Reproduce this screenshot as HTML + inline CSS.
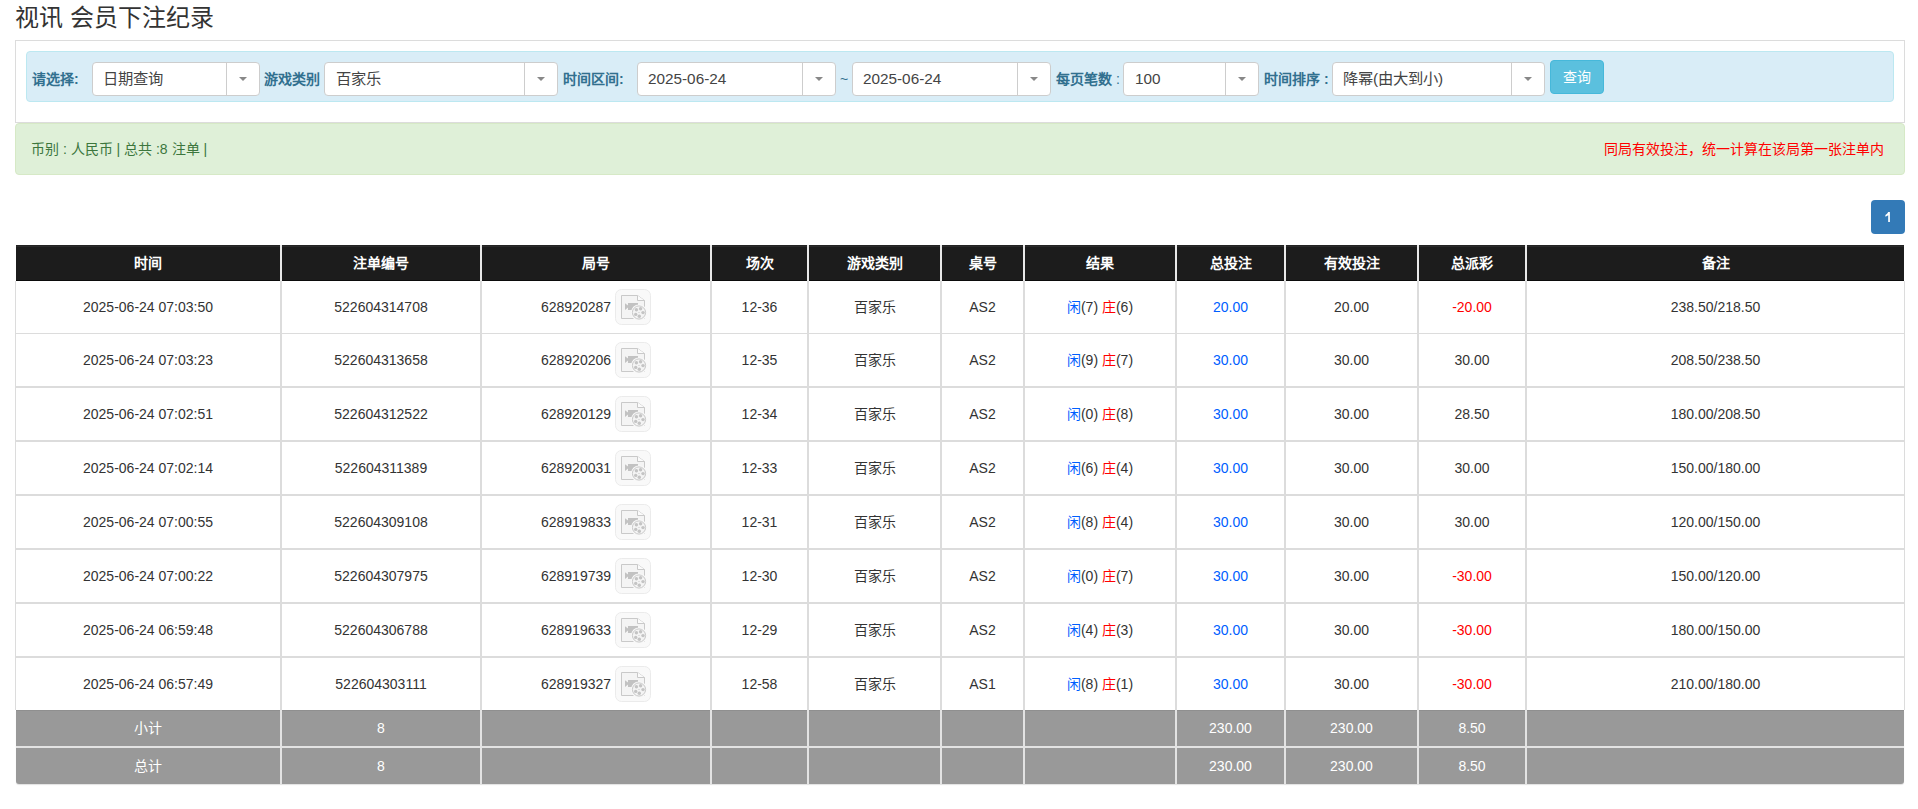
<!DOCTYPE html><html lang="zh-CN"><head><meta charset="utf-8"><style>
*{margin:0;padding:0;box-sizing:border-box}
html,body{width:1918px;height:809px;overflow:hidden;background:#fff}
body{font-family:"Liberation Sans",sans-serif;font-size:14px;color:#333;position:relative}
.a{position:absolute}
.t{position:absolute;white-space:nowrap;line-height:1}
.sel{position:absolute;top:62px;height:34px;background:#fff;border:1px solid #cdcdcd;border-radius:4px}
.sel .dv{position:absolute;top:0;bottom:0;width:1px;background:#cdcdcd}
.sel .ar{position:absolute;top:14px;width:0;height:0;border-left:4px solid transparent;border-right:4px solid transparent;border-top:4px solid #888}
.sel .tx{position:absolute;left:0;top:0;height:32px;line-height:32px;font-size:15.3px;color:#444;white-space:nowrap}
.lb{position:absolute;top:71px;height:16px;line-height:16px;font-weight:bold;color:#31708f;white-space:nowrap;font-size:14px}
.cell{position:absolute;display:flex;align-items:center;justify-content:center;white-space:nowrap;line-height:16px}
.vl{position:absolute;width:2px;background:#dcdcdc}
.hl{position:absolute;background:#dcdcdc}
.ic{display:inline-block;width:36px;height:36px;margin-left:4px;vertical-align:middle}
</style></head><body>
<div class="t" style="left:15px;top:5px;font-size:24px;line-height:26px;color:#333">视讯 会员下注纪录</div>
<div class="a" style="left:15px;top:40px;width:1890px;height:83px;border:1px solid #dcdcdc"></div>
<div class="a" style="left:26px;top:51px;width:1868px;height:51px;background:#d9edf7;border:1px solid #bce8f1;border-radius:4px"></div>
<div class="lb" style="left:32px">请选择:</div>
<div class="lb" style="left:264px">游戏类别</div>
<div class="lb" style="left:563px">时间区间:</div>
<div class="lb" style="left:1056px">每页笔数<span style="font-weight:normal"> :</span></div>
<div class="lb" style="left:1264px">时间排序 :</div>
<div class="sel" style="left:92px;width:168px"><div class="tx" style="left:10px">日期查询</div><div class="dv" style="left:133px"></div><div class="ar" style="left:146px"></div></div>
<div class="sel" style="left:324px;width:234px"><div class="tx" style="left:11px">百家乐</div><div class="dv" style="left:199px"></div><div class="ar" style="left:212px"></div></div>
<div class="sel" style="left:637px;width:199px"><div class="tx" style="left:10px">2025-06-24</div><div class="dv" style="left:164px"></div><div class="ar" style="left:177px"></div></div>
<div class="sel" style="left:852px;width:199px"><div class="tx" style="left:10px">2025-06-24</div><div class="dv" style="left:164px"></div><div class="ar" style="left:177px"></div></div>
<div class="sel" style="left:1123px;width:136px"><div class="tx" style="left:11px">100</div><div class="dv" style="left:101px"></div><div class="ar" style="left:114px"></div></div>
<div class="sel" style="left:1332px;width:213px"><div class="tx" style="left:10px">降幂(由大到小)</div><div class="dv" style="left:178px"></div><div class="ar" style="left:191px"></div></div>
<div class="t" style="left:840px;top:72px;color:#31708f;font-size:14px">~</div>
<div class="a" style="left:1550px;top:60px;width:54px;height:34px;background:#5bc0de;border:1px solid #46b8da;border-radius:4px;color:#fff;font-size:14px;line-height:32px;text-align:center">查询</div>
<div class="a" style="left:15px;top:123px;width:1890px;height:52px;background:#dff0d8;border:1px solid #d6e9c6;border-radius:4px"></div>
<div class="t" style="left:31px;top:141px;color:#3c763d;font-size:14px;line-height:16px">币别 : 人民币 | 总共 :8 注单 |</div>
<div class="t" style="left:1604px;top:141px;color:#f00;font-size:14px;line-height:16px">同局有效投注，统一计算在该局第一张注单内</div>
<div class="a" style="left:1871px;top:200px;width:34px;height:34px;background:#337ab7;border-radius:4px;"><svg width="34" height="34" style="position:absolute;left:0;top:0"><path d="M17.2 12H18.9V22H17.2V15.3Q16 16.3 14.4 16.7V15Q16.3 14.2 17.2 12Z" fill="#fff"/></svg></div>
<div class="a" style="left:16px;top:245px;width:1888px;height:36px;background:#1c1c1c;border-radius:2px 2px 0 0"></div>
<div class="a" style="left:16px;top:245px;width:1888px;height:1px;background:#232323"></div>
<div class="a" style="left:16px;top:246px;width:1888px;height:1px;background:#2a2a2a"></div>
<div class="a" style="left:16px;top:280px;width:1888px;height:1px;background:#0b0b0b"></div>
<div class="a" style="left:15px;top:281px;width:1px;height:429px;background:#dcdcdc"></div>
<div class="a" style="left:1904px;top:281px;width:1px;height:429px;background:#dcdcdc"></div>
<div class="hl" style="left:15px;top:333px;width:1890px;height:1px"></div>
<div class="hl" style="left:15px;top:386px;width:1890px;height:2px"></div>
<div class="hl" style="left:15px;top:440px;width:1890px;height:2px"></div>
<div class="hl" style="left:15px;top:494px;width:1890px;height:2px"></div>
<div class="hl" style="left:15px;top:548px;width:1890px;height:2px"></div>
<div class="hl" style="left:15px;top:602px;width:1890px;height:2px"></div>
<div class="hl" style="left:15px;top:656px;width:1890px;height:2px"></div>
<div class="a" style="left:16px;top:710px;width:1888px;height:74px;background:#999;border-radius:0 0 3px 3px;box-shadow:0 1px 1px rgba(0,0,0,.12)"></div>
<div class="a" style="left:16px;top:710px;width:1888px;height:1px;background:#8f8f8f"></div>
<div class="a" style="left:16px;top:746px;width:1888px;height:2px;background:#e3e3e3"></div>
<div class="a" style="left:280px;top:245px;width:2px;height:36px;background:#e8e8e8"></div>
<div class="vl" style="left:280px;top:281px;height:429px"></div>
<div class="a" style="left:280px;top:710px;width:2px;height:74px;background:#e3e3e3"></div>
<div class="a" style="left:480px;top:245px;width:2px;height:36px;background:#e8e8e8"></div>
<div class="vl" style="left:480px;top:281px;height:429px"></div>
<div class="a" style="left:480px;top:710px;width:2px;height:74px;background:#e3e3e3"></div>
<div class="a" style="left:710px;top:245px;width:2px;height:36px;background:#e8e8e8"></div>
<div class="vl" style="left:710px;top:281px;height:429px"></div>
<div class="a" style="left:710px;top:710px;width:2px;height:74px;background:#e3e3e3"></div>
<div class="a" style="left:807px;top:245px;width:2px;height:36px;background:#e8e8e8"></div>
<div class="vl" style="left:807px;top:281px;height:429px"></div>
<div class="a" style="left:807px;top:710px;width:2px;height:74px;background:#e3e3e3"></div>
<div class="a" style="left:940px;top:245px;width:2px;height:36px;background:#e8e8e8"></div>
<div class="vl" style="left:940px;top:281px;height:429px"></div>
<div class="a" style="left:940px;top:710px;width:2px;height:74px;background:#e3e3e3"></div>
<div class="a" style="left:1023px;top:245px;width:2px;height:36px;background:#e8e8e8"></div>
<div class="vl" style="left:1023px;top:281px;height:429px"></div>
<div class="a" style="left:1023px;top:710px;width:2px;height:74px;background:#e3e3e3"></div>
<div class="a" style="left:1175px;top:245px;width:2px;height:36px;background:#e8e8e8"></div>
<div class="vl" style="left:1175px;top:281px;height:429px"></div>
<div class="a" style="left:1175px;top:710px;width:2px;height:74px;background:#e3e3e3"></div>
<div class="a" style="left:1284px;top:245px;width:2px;height:36px;background:#e8e8e8"></div>
<div class="vl" style="left:1284px;top:281px;height:429px"></div>
<div class="a" style="left:1284px;top:710px;width:2px;height:74px;background:#e3e3e3"></div>
<div class="a" style="left:1417px;top:245px;width:2px;height:36px;background:#e8e8e8"></div>
<div class="vl" style="left:1417px;top:281px;height:429px"></div>
<div class="a" style="left:1417px;top:710px;width:2px;height:74px;background:#e3e3e3"></div>
<div class="a" style="left:1525px;top:245px;width:2px;height:36px;background:#e8e8e8"></div>
<div class="vl" style="left:1525px;top:281px;height:429px"></div>
<div class="a" style="left:1525px;top:710px;width:2px;height:74px;background:#e3e3e3"></div>
<div class="cell" style="left:16px;top:245px;width:264px;height:36px;color:#fff;font-weight:bold"><span>时间</span></div>
<div class="cell" style="left:282px;top:245px;width:198px;height:36px;color:#fff;font-weight:bold"><span>注单编号</span></div>
<div class="cell" style="left:482px;top:245px;width:228px;height:36px;color:#fff;font-weight:bold"><span>局号</span></div>
<div class="cell" style="left:712px;top:245px;width:95px;height:36px;color:#fff;font-weight:bold"><span>场次</span></div>
<div class="cell" style="left:809px;top:245px;width:131px;height:36px;color:#fff;font-weight:bold"><span>游戏类别</span></div>
<div class="cell" style="left:942px;top:245px;width:81px;height:36px;color:#fff;font-weight:bold"><span>桌号</span></div>
<div class="cell" style="left:1025px;top:245px;width:150px;height:36px;color:#fff;font-weight:bold"><span>结果</span></div>
<div class="cell" style="left:1177px;top:245px;width:107px;height:36px;color:#fff;font-weight:bold"><span>总投注</span></div>
<div class="cell" style="left:1286px;top:245px;width:131px;height:36px;color:#fff;font-weight:bold"><span>有效投注</span></div>
<div class="cell" style="left:1419px;top:245px;width:106px;height:36px;color:#fff;font-weight:bold"><span>总派彩</span></div>
<div class="cell" style="left:1527px;top:245px;width:377px;height:36px;color:#fff;font-weight:bold"><span>备注</span></div>
<div class="cell" style="left:16px;top:281px;width:264px;height:52px;"><span>2025-06-24 07:03:50</span></div>
<div class="cell" style="left:282px;top:281px;width:198px;height:52px;"><span>522604314708</span></div>
<div class="cell" style="left:482px;top:281px;width:228px;height:52px;"><span><span style="display:inline-flex;align-items:center"><span>628920287</span><svg class="ic" width="36" height="36" viewBox="0 0 36 36"><rect x="0.5" y="0.5" width="35" height="35" rx="6" fill="#f9f9f9" stroke="#ebebeb"/><path d="M6.5 6.5H22.5L29.5 11.5V29.5H6.5Z" fill="#f4f4f4" stroke="#c9c9c9"/><path d="M22.5 6.5V11.5H29.5" fill="#fbfbfb" stroke="#c9c9c9"/><path d="M10 14.2L13 16.6V14H23V21H13V18.6L10 21Z" fill="#c2c2c2"/><circle cx="24" cy="23.5" r="8" fill="#f9f9f9"/><circle cx="24" cy="23.5" r="6.6" fill="#f4f4f4" stroke="#c9c9c9"/><g fill="#c4c4c4"><circle cx="21.4" cy="20.8" r="1.7"/><circle cx="25.6" cy="19.8" r="1.7"/><circle cx="28" cy="23.6" r="1.7"/><circle cx="24.3" cy="27.2" r="1.7"/><circle cx="20.7" cy="25.4" r="1.7"/><circle cx="24" cy="23.5" r="0.6"/></g></svg></span></span></div>
<div class="cell" style="left:712px;top:281px;width:95px;height:52px;"><span>12-36</span></div>
<div class="cell" style="left:809px;top:281px;width:131px;height:52px;"><span>百家乐</span></div>
<div class="cell" style="left:942px;top:281px;width:81px;height:52px;"><span>AS2</span></div>
<div class="cell" style="left:1025px;top:281px;width:150px;height:52px;"><span><span style="color:#005eff">闲</span>(7) <span style="color:#f00">庄</span>(6)</span></div>
<div class="cell" style="left:1177px;top:281px;width:107px;height:52px;"><span><span style="color:#005eff">20.00</span></span></div>
<div class="cell" style="left:1286px;top:281px;width:131px;height:52px;"><span>20.00</span></div>
<div class="cell" style="left:1419px;top:281px;width:106px;height:52px;"><span><span style="color:#f00">-20.00</span></span></div>
<div class="cell" style="left:1527px;top:281px;width:377px;height:52px;"><span>238.50/218.50</span></div>
<div class="cell" style="left:16px;top:334px;width:264px;height:52px;"><span>2025-06-24 07:03:23</span></div>
<div class="cell" style="left:282px;top:334px;width:198px;height:52px;"><span>522604313658</span></div>
<div class="cell" style="left:482px;top:334px;width:228px;height:52px;"><span><span style="display:inline-flex;align-items:center"><span>628920206</span><svg class="ic" width="36" height="36" viewBox="0 0 36 36"><rect x="0.5" y="0.5" width="35" height="35" rx="6" fill="#f9f9f9" stroke="#ebebeb"/><path d="M6.5 6.5H22.5L29.5 11.5V29.5H6.5Z" fill="#f4f4f4" stroke="#c9c9c9"/><path d="M22.5 6.5V11.5H29.5" fill="#fbfbfb" stroke="#c9c9c9"/><path d="M10 14.2L13 16.6V14H23V21H13V18.6L10 21Z" fill="#c2c2c2"/><circle cx="24" cy="23.5" r="8" fill="#f9f9f9"/><circle cx="24" cy="23.5" r="6.6" fill="#f4f4f4" stroke="#c9c9c9"/><g fill="#c4c4c4"><circle cx="21.4" cy="20.8" r="1.7"/><circle cx="25.6" cy="19.8" r="1.7"/><circle cx="28" cy="23.6" r="1.7"/><circle cx="24.3" cy="27.2" r="1.7"/><circle cx="20.7" cy="25.4" r="1.7"/><circle cx="24" cy="23.5" r="0.6"/></g></svg></span></span></div>
<div class="cell" style="left:712px;top:334px;width:95px;height:52px;"><span>12-35</span></div>
<div class="cell" style="left:809px;top:334px;width:131px;height:52px;"><span>百家乐</span></div>
<div class="cell" style="left:942px;top:334px;width:81px;height:52px;"><span>AS2</span></div>
<div class="cell" style="left:1025px;top:334px;width:150px;height:52px;"><span><span style="color:#005eff">闲</span>(9) <span style="color:#f00">庄</span>(7)</span></div>
<div class="cell" style="left:1177px;top:334px;width:107px;height:52px;"><span><span style="color:#005eff">30.00</span></span></div>
<div class="cell" style="left:1286px;top:334px;width:131px;height:52px;"><span>30.00</span></div>
<div class="cell" style="left:1419px;top:334px;width:106px;height:52px;"><span>30.00</span></div>
<div class="cell" style="left:1527px;top:334px;width:377px;height:52px;"><span>208.50/238.50</span></div>
<div class="cell" style="left:16px;top:388px;width:264px;height:52px;"><span>2025-06-24 07:02:51</span></div>
<div class="cell" style="left:282px;top:388px;width:198px;height:52px;"><span>522604312522</span></div>
<div class="cell" style="left:482px;top:388px;width:228px;height:52px;"><span><span style="display:inline-flex;align-items:center"><span>628920129</span><svg class="ic" width="36" height="36" viewBox="0 0 36 36"><rect x="0.5" y="0.5" width="35" height="35" rx="6" fill="#f9f9f9" stroke="#ebebeb"/><path d="M6.5 6.5H22.5L29.5 11.5V29.5H6.5Z" fill="#f4f4f4" stroke="#c9c9c9"/><path d="M22.5 6.5V11.5H29.5" fill="#fbfbfb" stroke="#c9c9c9"/><path d="M10 14.2L13 16.6V14H23V21H13V18.6L10 21Z" fill="#c2c2c2"/><circle cx="24" cy="23.5" r="8" fill="#f9f9f9"/><circle cx="24" cy="23.5" r="6.6" fill="#f4f4f4" stroke="#c9c9c9"/><g fill="#c4c4c4"><circle cx="21.4" cy="20.8" r="1.7"/><circle cx="25.6" cy="19.8" r="1.7"/><circle cx="28" cy="23.6" r="1.7"/><circle cx="24.3" cy="27.2" r="1.7"/><circle cx="20.7" cy="25.4" r="1.7"/><circle cx="24" cy="23.5" r="0.6"/></g></svg></span></span></div>
<div class="cell" style="left:712px;top:388px;width:95px;height:52px;"><span>12-34</span></div>
<div class="cell" style="left:809px;top:388px;width:131px;height:52px;"><span>百家乐</span></div>
<div class="cell" style="left:942px;top:388px;width:81px;height:52px;"><span>AS2</span></div>
<div class="cell" style="left:1025px;top:388px;width:150px;height:52px;"><span><span style="color:#005eff">闲</span>(0) <span style="color:#f00">庄</span>(8)</span></div>
<div class="cell" style="left:1177px;top:388px;width:107px;height:52px;"><span><span style="color:#005eff">30.00</span></span></div>
<div class="cell" style="left:1286px;top:388px;width:131px;height:52px;"><span>30.00</span></div>
<div class="cell" style="left:1419px;top:388px;width:106px;height:52px;"><span>28.50</span></div>
<div class="cell" style="left:1527px;top:388px;width:377px;height:52px;"><span>180.00/208.50</span></div>
<div class="cell" style="left:16px;top:442px;width:264px;height:52px;"><span>2025-06-24 07:02:14</span></div>
<div class="cell" style="left:282px;top:442px;width:198px;height:52px;"><span>522604311389</span></div>
<div class="cell" style="left:482px;top:442px;width:228px;height:52px;"><span><span style="display:inline-flex;align-items:center"><span>628920031</span><svg class="ic" width="36" height="36" viewBox="0 0 36 36"><rect x="0.5" y="0.5" width="35" height="35" rx="6" fill="#f9f9f9" stroke="#ebebeb"/><path d="M6.5 6.5H22.5L29.5 11.5V29.5H6.5Z" fill="#f4f4f4" stroke="#c9c9c9"/><path d="M22.5 6.5V11.5H29.5" fill="#fbfbfb" stroke="#c9c9c9"/><path d="M10 14.2L13 16.6V14H23V21H13V18.6L10 21Z" fill="#c2c2c2"/><circle cx="24" cy="23.5" r="8" fill="#f9f9f9"/><circle cx="24" cy="23.5" r="6.6" fill="#f4f4f4" stroke="#c9c9c9"/><g fill="#c4c4c4"><circle cx="21.4" cy="20.8" r="1.7"/><circle cx="25.6" cy="19.8" r="1.7"/><circle cx="28" cy="23.6" r="1.7"/><circle cx="24.3" cy="27.2" r="1.7"/><circle cx="20.7" cy="25.4" r="1.7"/><circle cx="24" cy="23.5" r="0.6"/></g></svg></span></span></div>
<div class="cell" style="left:712px;top:442px;width:95px;height:52px;"><span>12-33</span></div>
<div class="cell" style="left:809px;top:442px;width:131px;height:52px;"><span>百家乐</span></div>
<div class="cell" style="left:942px;top:442px;width:81px;height:52px;"><span>AS2</span></div>
<div class="cell" style="left:1025px;top:442px;width:150px;height:52px;"><span><span style="color:#005eff">闲</span>(6) <span style="color:#f00">庄</span>(4)</span></div>
<div class="cell" style="left:1177px;top:442px;width:107px;height:52px;"><span><span style="color:#005eff">30.00</span></span></div>
<div class="cell" style="left:1286px;top:442px;width:131px;height:52px;"><span>30.00</span></div>
<div class="cell" style="left:1419px;top:442px;width:106px;height:52px;"><span>30.00</span></div>
<div class="cell" style="left:1527px;top:442px;width:377px;height:52px;"><span>150.00/180.00</span></div>
<div class="cell" style="left:16px;top:496px;width:264px;height:52px;"><span>2025-06-24 07:00:55</span></div>
<div class="cell" style="left:282px;top:496px;width:198px;height:52px;"><span>522604309108</span></div>
<div class="cell" style="left:482px;top:496px;width:228px;height:52px;"><span><span style="display:inline-flex;align-items:center"><span>628919833</span><svg class="ic" width="36" height="36" viewBox="0 0 36 36"><rect x="0.5" y="0.5" width="35" height="35" rx="6" fill="#f9f9f9" stroke="#ebebeb"/><path d="M6.5 6.5H22.5L29.5 11.5V29.5H6.5Z" fill="#f4f4f4" stroke="#c9c9c9"/><path d="M22.5 6.5V11.5H29.5" fill="#fbfbfb" stroke="#c9c9c9"/><path d="M10 14.2L13 16.6V14H23V21H13V18.6L10 21Z" fill="#c2c2c2"/><circle cx="24" cy="23.5" r="8" fill="#f9f9f9"/><circle cx="24" cy="23.5" r="6.6" fill="#f4f4f4" stroke="#c9c9c9"/><g fill="#c4c4c4"><circle cx="21.4" cy="20.8" r="1.7"/><circle cx="25.6" cy="19.8" r="1.7"/><circle cx="28" cy="23.6" r="1.7"/><circle cx="24.3" cy="27.2" r="1.7"/><circle cx="20.7" cy="25.4" r="1.7"/><circle cx="24" cy="23.5" r="0.6"/></g></svg></span></span></div>
<div class="cell" style="left:712px;top:496px;width:95px;height:52px;"><span>12-31</span></div>
<div class="cell" style="left:809px;top:496px;width:131px;height:52px;"><span>百家乐</span></div>
<div class="cell" style="left:942px;top:496px;width:81px;height:52px;"><span>AS2</span></div>
<div class="cell" style="left:1025px;top:496px;width:150px;height:52px;"><span><span style="color:#005eff">闲</span>(8) <span style="color:#f00">庄</span>(4)</span></div>
<div class="cell" style="left:1177px;top:496px;width:107px;height:52px;"><span><span style="color:#005eff">30.00</span></span></div>
<div class="cell" style="left:1286px;top:496px;width:131px;height:52px;"><span>30.00</span></div>
<div class="cell" style="left:1419px;top:496px;width:106px;height:52px;"><span>30.00</span></div>
<div class="cell" style="left:1527px;top:496px;width:377px;height:52px;"><span>120.00/150.00</span></div>
<div class="cell" style="left:16px;top:550px;width:264px;height:52px;"><span>2025-06-24 07:00:22</span></div>
<div class="cell" style="left:282px;top:550px;width:198px;height:52px;"><span>522604307975</span></div>
<div class="cell" style="left:482px;top:550px;width:228px;height:52px;"><span><span style="display:inline-flex;align-items:center"><span>628919739</span><svg class="ic" width="36" height="36" viewBox="0 0 36 36"><rect x="0.5" y="0.5" width="35" height="35" rx="6" fill="#f9f9f9" stroke="#ebebeb"/><path d="M6.5 6.5H22.5L29.5 11.5V29.5H6.5Z" fill="#f4f4f4" stroke="#c9c9c9"/><path d="M22.5 6.5V11.5H29.5" fill="#fbfbfb" stroke="#c9c9c9"/><path d="M10 14.2L13 16.6V14H23V21H13V18.6L10 21Z" fill="#c2c2c2"/><circle cx="24" cy="23.5" r="8" fill="#f9f9f9"/><circle cx="24" cy="23.5" r="6.6" fill="#f4f4f4" stroke="#c9c9c9"/><g fill="#c4c4c4"><circle cx="21.4" cy="20.8" r="1.7"/><circle cx="25.6" cy="19.8" r="1.7"/><circle cx="28" cy="23.6" r="1.7"/><circle cx="24.3" cy="27.2" r="1.7"/><circle cx="20.7" cy="25.4" r="1.7"/><circle cx="24" cy="23.5" r="0.6"/></g></svg></span></span></div>
<div class="cell" style="left:712px;top:550px;width:95px;height:52px;"><span>12-30</span></div>
<div class="cell" style="left:809px;top:550px;width:131px;height:52px;"><span>百家乐</span></div>
<div class="cell" style="left:942px;top:550px;width:81px;height:52px;"><span>AS2</span></div>
<div class="cell" style="left:1025px;top:550px;width:150px;height:52px;"><span><span style="color:#005eff">闲</span>(0) <span style="color:#f00">庄</span>(7)</span></div>
<div class="cell" style="left:1177px;top:550px;width:107px;height:52px;"><span><span style="color:#005eff">30.00</span></span></div>
<div class="cell" style="left:1286px;top:550px;width:131px;height:52px;"><span>30.00</span></div>
<div class="cell" style="left:1419px;top:550px;width:106px;height:52px;"><span><span style="color:#f00">-30.00</span></span></div>
<div class="cell" style="left:1527px;top:550px;width:377px;height:52px;"><span>150.00/120.00</span></div>
<div class="cell" style="left:16px;top:604px;width:264px;height:52px;"><span>2025-06-24 06:59:48</span></div>
<div class="cell" style="left:282px;top:604px;width:198px;height:52px;"><span>522604306788</span></div>
<div class="cell" style="left:482px;top:604px;width:228px;height:52px;"><span><span style="display:inline-flex;align-items:center"><span>628919633</span><svg class="ic" width="36" height="36" viewBox="0 0 36 36"><rect x="0.5" y="0.5" width="35" height="35" rx="6" fill="#f9f9f9" stroke="#ebebeb"/><path d="M6.5 6.5H22.5L29.5 11.5V29.5H6.5Z" fill="#f4f4f4" stroke="#c9c9c9"/><path d="M22.5 6.5V11.5H29.5" fill="#fbfbfb" stroke="#c9c9c9"/><path d="M10 14.2L13 16.6V14H23V21H13V18.6L10 21Z" fill="#c2c2c2"/><circle cx="24" cy="23.5" r="8" fill="#f9f9f9"/><circle cx="24" cy="23.5" r="6.6" fill="#f4f4f4" stroke="#c9c9c9"/><g fill="#c4c4c4"><circle cx="21.4" cy="20.8" r="1.7"/><circle cx="25.6" cy="19.8" r="1.7"/><circle cx="28" cy="23.6" r="1.7"/><circle cx="24.3" cy="27.2" r="1.7"/><circle cx="20.7" cy="25.4" r="1.7"/><circle cx="24" cy="23.5" r="0.6"/></g></svg></span></span></div>
<div class="cell" style="left:712px;top:604px;width:95px;height:52px;"><span>12-29</span></div>
<div class="cell" style="left:809px;top:604px;width:131px;height:52px;"><span>百家乐</span></div>
<div class="cell" style="left:942px;top:604px;width:81px;height:52px;"><span>AS2</span></div>
<div class="cell" style="left:1025px;top:604px;width:150px;height:52px;"><span><span style="color:#005eff">闲</span>(4) <span style="color:#f00">庄</span>(3)</span></div>
<div class="cell" style="left:1177px;top:604px;width:107px;height:52px;"><span><span style="color:#005eff">30.00</span></span></div>
<div class="cell" style="left:1286px;top:604px;width:131px;height:52px;"><span>30.00</span></div>
<div class="cell" style="left:1419px;top:604px;width:106px;height:52px;"><span><span style="color:#f00">-30.00</span></span></div>
<div class="cell" style="left:1527px;top:604px;width:377px;height:52px;"><span>180.00/150.00</span></div>
<div class="cell" style="left:16px;top:658px;width:264px;height:52px;"><span>2025-06-24 06:57:49</span></div>
<div class="cell" style="left:282px;top:658px;width:198px;height:52px;"><span>522604303111</span></div>
<div class="cell" style="left:482px;top:658px;width:228px;height:52px;"><span><span style="display:inline-flex;align-items:center"><span>628919327</span><svg class="ic" width="36" height="36" viewBox="0 0 36 36"><rect x="0.5" y="0.5" width="35" height="35" rx="6" fill="#f9f9f9" stroke="#ebebeb"/><path d="M6.5 6.5H22.5L29.5 11.5V29.5H6.5Z" fill="#f4f4f4" stroke="#c9c9c9"/><path d="M22.5 6.5V11.5H29.5" fill="#fbfbfb" stroke="#c9c9c9"/><path d="M10 14.2L13 16.6V14H23V21H13V18.6L10 21Z" fill="#c2c2c2"/><circle cx="24" cy="23.5" r="8" fill="#f9f9f9"/><circle cx="24" cy="23.5" r="6.6" fill="#f4f4f4" stroke="#c9c9c9"/><g fill="#c4c4c4"><circle cx="21.4" cy="20.8" r="1.7"/><circle cx="25.6" cy="19.8" r="1.7"/><circle cx="28" cy="23.6" r="1.7"/><circle cx="24.3" cy="27.2" r="1.7"/><circle cx="20.7" cy="25.4" r="1.7"/><circle cx="24" cy="23.5" r="0.6"/></g></svg></span></span></div>
<div class="cell" style="left:712px;top:658px;width:95px;height:52px;"><span>12-58</span></div>
<div class="cell" style="left:809px;top:658px;width:131px;height:52px;"><span>百家乐</span></div>
<div class="cell" style="left:942px;top:658px;width:81px;height:52px;"><span>AS1</span></div>
<div class="cell" style="left:1025px;top:658px;width:150px;height:52px;"><span><span style="color:#005eff">闲</span>(8) <span style="color:#f00">庄</span>(1)</span></div>
<div class="cell" style="left:1177px;top:658px;width:107px;height:52px;"><span><span style="color:#005eff">30.00</span></span></div>
<div class="cell" style="left:1286px;top:658px;width:131px;height:52px;"><span>30.00</span></div>
<div class="cell" style="left:1419px;top:658px;width:106px;height:52px;"><span><span style="color:#f00">-30.00</span></span></div>
<div class="cell" style="left:1527px;top:658px;width:377px;height:52px;"><span>210.00/180.00</span></div>
<div class="cell" style="left:16px;top:710px;width:264px;height:36px;color:#fff"><span>小计</span></div>
<div class="cell" style="left:282px;top:710px;width:198px;height:36px;color:#fff"><span>8</span></div>
<div class="cell" style="left:1177px;top:710px;width:107px;height:36px;color:#fff"><span>230.00</span></div>
<div class="cell" style="left:1286px;top:710px;width:131px;height:36px;color:#fff"><span>230.00</span></div>
<div class="cell" style="left:1419px;top:710px;width:106px;height:36px;color:#fff"><span>8.50</span></div>
<div class="cell" style="left:16px;top:748px;width:264px;height:36px;color:#fff"><span>总计</span></div>
<div class="cell" style="left:282px;top:748px;width:198px;height:36px;color:#fff"><span>8</span></div>
<div class="cell" style="left:1177px;top:748px;width:107px;height:36px;color:#fff"><span>230.00</span></div>
<div class="cell" style="left:1286px;top:748px;width:131px;height:36px;color:#fff"><span>230.00</span></div>
<div class="cell" style="left:1419px;top:748px;width:106px;height:36px;color:#fff"><span>8.50</span></div>
</body></html>
